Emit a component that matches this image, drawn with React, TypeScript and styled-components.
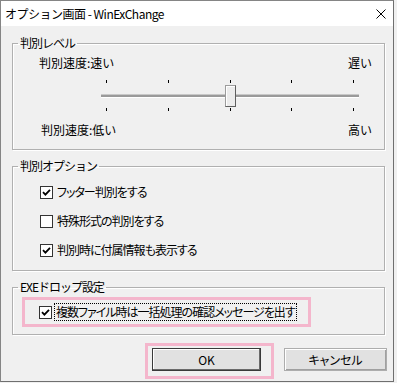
import React from "react";
import styled, { createGlobalStyle } from "styled-components";

const GlobalStyle = createGlobalStyle`
    body {
        margin: 0;
        background: #f0f0f0;
        font-family: "Noto Sans CJK JP", "Noto Sans", sans-serif;
        font-size: 12px;
        line-height: 16px;
        color: #000;
    }
`;

const TICKS = 5;
const TICK_GAP = 62;
const SLIDER_VALUE = 2;

const CheckMark = () => (
    <svg width="9" height="9" viewBox="0 0 9 9">
        <path d="M1 4.2 L3.4 6.6 L8 1.8" fill="none" stroke="#000" strokeWidth="1.8" />
    </svg>
);

const CheckRow = ({ label, checked, focused }: { label: string; checked: boolean; focused?: boolean }) => (
    <Row>
        <Box>{checked && <CheckMark />}</Box>
        <Label focused={!!focused}>{label}</Label>
    </Row>
);

export default function App() {
    return (
        <>
            <GlobalStyle />
            <Window>
                <TitleBar>
                    <Title>オプション画面 - WinExChange</Title>
                    <Close>
                        <svg width="10" height="10" viewBox="0 0 10 10">
                            <path d="M0.5 0.5 L9.5 9.5 M9.5 0.5 L0.5 9.5" stroke="#000" strokeWidth="1" />
                        </svg>
                    </Close>
                </TitleBar>
                <Body>
                    <Group>
                        <Legend>判別レベル</Legend>
                        <LevelContent>
                            <SpeedRow>
                                <span>判別速度:速い</span>
                                <span>遅い</span>
                            </SpeedRow>
                            <Slider>
                                <Ticks>
                                    {Array.from({ length: TICKS }).map((_, i) => (
                                        <Tick key={i} />
                                    ))}
                                </Ticks>
                                <Track />
                                <Thumb style={{ left: 5 + SLIDER_VALUE * TICK_GAP - 5 }} />
                                <Ticks>
                                    {Array.from({ length: TICKS }).map((_, i) => (
                                        <Tick key={i} />
                                    ))}
                                </Ticks>
                            </Slider>
                            <SpeedRow shift>
                                <span>判別速度:低い</span>
                                <span>高い</span>
                            </SpeedRow>
                        </LevelContent>
                    </Group>

                    <Group>
                        <Legend>判別オプション</Legend>
                        <OptionContent>
                            <CheckRow checked label="フッター判別をする" />
                            <CheckRow checked={false} label="特殊形式の判別をする" />
                            <CheckRow checked label="判別時に付属情報も表示する" />
                        </OptionContent>
                    </Group>

                    <Group>
                        <Legend>EXEドロップ設定</Legend>
                        <DropContent>
                            <Highlight>
                                <CheckRow checked focused label="複数ファイル時は一括処理の確認メッセージを出す" />
                            </Highlight>
                        </DropContent>
                    </Group>

                    <ButtonRow>
                        <ButtonHighlight>
                            <Button primary>OK</Button>
                        </ButtonHighlight>
                        <Button>キャンセル</Button>
                    </ButtonRow>
                </Body>
            </Window>
        </>
    );
}

const Window = styled.div`
    width: 394px;
    height: 382px;
    box-sizing: border-box;
    border: 1px solid #858585;
    border-right-color: #6f6f6f;
    border-bottom-color: #6f6f6f;
    background: #f0f0f0;
    display: flex;
    flex-direction: column;
`;

const TitleBar = styled.div`
    height: 25px;
    background: #fff;
    display: flex;
    align-items: center;
    justify-content: space-between;
    padding: 0 7px 0 4px;
`;

const Title = styled.div`
    font-size: 12px;
    letter-spacing: -0.5px;
    color: #000;
`;

const Close = styled.div`
    display: flex;
    width: 10px;
    height: 10px;
`;

const Body = styled.div`
    display: flex;
    flex-direction: column;
    padding: 9px 8px 0 11px;
`;

const Group = styled.fieldset`
    margin: 0 0 8px;
    padding: 0;
    border: 1px solid #b0b0b0;
    box-shadow: inset 1px 1px 0 #fff, 1px 1px 0 #fff;
    min-width: 0;
`;

const Legend = styled.legend`
    margin-left: 5px;
    padding: 0 2px;
    line-height: 16px;
    letter-spacing: -1px;
`;

const LevelContent = styled.div`
    display: flex;
    flex-direction: column;
    padding: 4px 12px 11px 26px;
`;

const SpeedRow = styled.div<{ shift?: boolean }>`
    display: flex;
    justify-content: space-between;
    padding-left: ${(p) => (p.shift ? 2 : 0)}px;
    height: 16px;
`;

const Slider = styled.div`
    position: relative;
    width: 258px;
    margin: 9px 0 10px 62px;
    display: flex;
    flex-direction: column;
    height: 32px;
    justify-content: space-between;
`;

const Ticks = styled.div`
    display: flex;
    justify-content: space-between;
    padding: 0 5px 1px;
`;

const Tick = styled.div`
    width: 1px;
    height: 3px;
    background: #000;
`;

const Track = styled.div`
    height: 2px;
    background: #9a9a9a;
    border-bottom: 1px solid #fff;
    border-top: 1px solid #c8c8c8;
`;

const Thumb = styled.div`
    position: absolute;
    top: 5px;
    width: 11px;
    height: 22px;
    box-sizing: border-box;
    background: #ececec;
    border: 1px solid #9c9c9c;
    border-right-color: #5f5f5f;
    border-bottom-color: #5f5f5f;
    box-shadow: inset 1px 1px 0 #fff;
`;

const OptionContent = styled.div`
    display: flex;
    flex-direction: column;
    gap: 13px;
    padding: 10px 0 12px 27px;
`;

const Row = styled.div`
    display: flex;
    align-items: center;
    height: 16px;
`;

const Box = styled.div`
    flex: none;
    width: 13px;
    height: 13px;
    box-sizing: border-box;
    border: 1px solid #333;
    background: #fff;
    display: flex;
    align-items: center;
    justify-content: center;
    margin-right: 3px;
`;

const Label = styled.span<{ focused: boolean }>`
    padding: 0 1px;
    outline: ${(p) => (p.focused ? "1px dotted #000" : "none")};
    font-feature-settings: "palt";
    letter-spacing: -1px;
    white-space: nowrap;
`;

const DropContent = styled.div`
    padding: 2px 0 7px 9px;
`;

const Highlight = styled.div`
    width: 289px;
    box-sizing: border-box;
    border: 3px solid #f4b6cc;
    padding: 4px 0 4px 14px;
`;

const ButtonRow = styled.div`
    display: flex;
    justify-content: flex-end;
    align-items: flex-start;
    gap: 10px;
    margin-right: -2px;
`;

const ButtonHighlight = styled.div`
    border: 3px solid #f4b6cc;
    padding: 2px 10px 5px 4px;
`;

const Button = styled.div<{ primary?: boolean }>`
    width: ${(p) => (p.primary ? 109 : 103)}px;
    height: 23px;
    box-sizing: border-box;
    margin-top: ${(p) => (p.primary ? 0 : 5)}px;
    background: #e1e1e1;
    border: 1px solid ${(p) => (p.primary ? "#3a3a3a" : "#adadad")};
    box-shadow: ${(p) => (p.primary ? "inset -1px -1px 0 #6a6a6a, inset 1px 1px 0 #fff" : "inset 1px 1px 0 #fff, inset -1px -1px 0 #a0a0a0")};
    display: flex;
    align-items: center;
    justify-content: center;
    font-feature-settings: "palt";
`;
